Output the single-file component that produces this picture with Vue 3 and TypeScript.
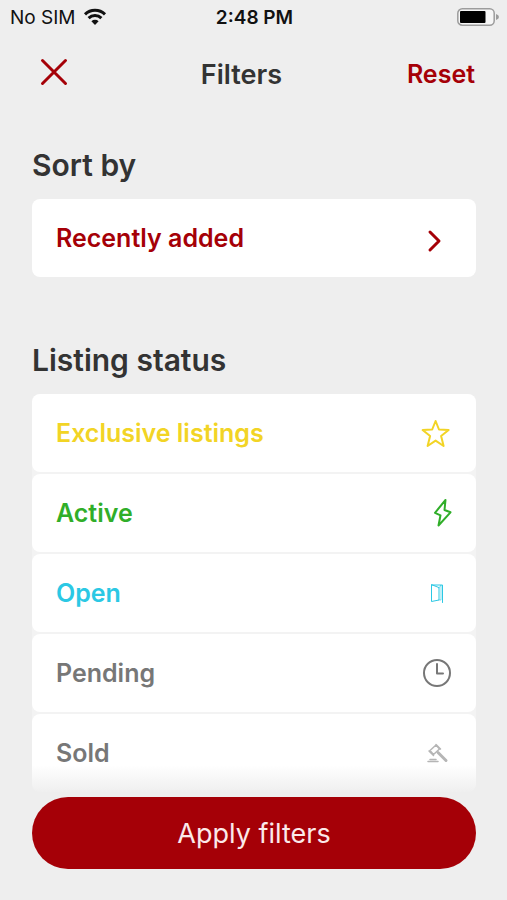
<script setup lang="ts">
import { ref } from 'vue'

type IconName = 'star' | 'bolt' | 'door' | 'clock' | 'gavel'

interface StatusOption {
  id: string
  label: string
  icon: IconName
}

const options: StatusOption[] = [
  { id: 'exclusive', label: 'Exclusive listings', icon: 'star' },
  { id: 'active', label: 'Active', icon: 'bolt' },
  { id: 'open', label: 'Open', icon: 'door' },
  { id: 'pending', label: 'Pending', icon: 'clock' },
  { id: 'sold', label: 'Sold', icon: 'gavel' },
]

const selected = ref<string[]>([])

function toggle(id: string): void {
  selected.value = selected.value.includes(id)
    ? selected.value.filter((item) => item !== id)
    : [...selected.value, id]
}

function reset(): void {
  selected.value = []
}
</script>

<template>
  <div class="screen">
    <div class="status-bar">
      <div class="carrier">
        <span>No SIM</span>
        <svg class="wifi" viewBox="0 0 24 18" aria-hidden="true">
          <path d="M2 6.4a14.4 14.4 0 0 1 20 0" />
          <path d="M5.6 10.2a9.2 9.2 0 0 1 12.8 0" />
          <path class="dot" d="M12 17l-3.6-3.7a5.2 5.2 0 0 1 7.2 0z" />
        </svg>
      </div>
      <span class="time">2:48 PM</span>
      <div class="power">
        <svg class="battery" viewBox="0 0 42 18" aria-hidden="true">
          <rect class="shell" x="0.8" y="0.8" width="36.4" height="16.4" rx="4.5" />
          <rect x="3" y="3" width="25.5" height="12" rx="1" />
          <path class="tip" d="M39 6q3 1 3 3t-3 3z" />
        </svg>
      </div>
    </div>

    <header class="header">
      <button class="close" type="button" aria-label="Close">
        <svg viewBox="0 0 28 28" aria-hidden="true"><path d="M2.5 2.5l23 23M25.5 2.5l-23 23" /></svg>
      </button>
      <h1 class="title">Filters</h1>
      <button class="reset" type="button" @click="reset">Reset</button>
    </header>

    <main class="content">
      <section class="group">
        <h2 class="heading">Sort by</h2>
        <button class="row sort" type="button">
          <span>Recently added</span>
          <svg class="icon" viewBox="0 0 32 32" aria-hidden="true"><path d="M9 10l9 9-9 9" /></svg>
        </button>
      </section>

      <section class="group">
        <h2 class="heading">Listing status</h2>
        <div class="list">
          <button
            v-for="option in options"
            :key="option.id"
            type="button"
            class="row"
            :class="option.id"
            :aria-pressed="selected.includes(option.id)"
            @click="toggle(option.id)"
          >
            <span>{{ option.label }}</span>
            <svg class="icon" viewBox="0 0 32 32" aria-hidden="true">
              <path
                v-if="option.icon === 'star'"
                d="M14.6 4l3.4 8.5 9.6.5-7.5 6 2.5 10-8-5.4-8 5.4 2.5-10-7.5-6 9.6-.5z"
              />
              <path v-else-if="option.icon === 'bolt'" d="M24.5 3L14 15.8l5.5 2.5-2 10.2 12-13.2-6-2.3z" />
              <g v-else-if="option.icon === 'door'">
                <path d="M10.5 8h11v17.5M10.5 8v16.5l7.5-1.5V11z" />
                <path class="faint" d="M18 11l2-3v15h-2" />
              </g>
              <g v-else-if="option.icon === 'clock'">
                <circle cx="16" cy="16" r="13" />
                <path d="M16 7v9.5h6" />
              </g>
              <g v-else>
                <path d="M9 13.5l6-5.5 3.5 4-6 5.500zM8 14l4.500 4.500M15 7.500l4.500 4.500" />
                <path class="handle" d="M17 15.500l8 8" />
                <path class="base" d="M7 24.500h10M9 22.500h6" />
              </g>
            </svg>
          </button>
        </div>
      </section>
    </main>

    <footer class="footer">
      <button class="apply" type="button">Apply filters</button>
    </footer>
  </div>
</template>

<style>
body {
  margin: 0;
  background: #eeeeee;
}
</style>

<style scoped>
.screen {
  display: flex;
  flex-direction: column;
  height: 100vh;
  background: #eeeeee;
  color: #333333;
  font-family: Inter, "Liberation Sans", sans-serif;
}

button {
  margin: 0;
  padding: 0;
  border: 0;
  background: none;
  color: inherit;
  font: inherit;
  cursor: pointer;
}

svg {
  display: block;
  fill: none;
  stroke: currentColor;
  stroke-linecap: round;
  stroke-linejoin: round;
}

.status-bar {
  display: grid;
  grid-template-columns: 1fr auto 1fr;
  align-items: center;
  height: 34px;
  padding: 0 8px 0 10px;
  color: #111111;
  font-size: 19px;
}

.carrier {
  display: flex;
  align-items: center;
  gap: 7px;
}

.wifi {
  width: 24px;
  height: 18px;
  stroke-width: 3;
  stroke-linecap: butt;
}

.wifi .dot {
  fill: currentColor;
  stroke: none;
}

.time {
  font-weight: 600;
}

.power {
  display: flex;
  justify-content: flex-end;
}

.battery {
  width: 42px;
  height: 18px;
  fill: #000000;
  stroke: none;
}

.battery .shell {
  fill: #f6f6f6;
  stroke: #9c9c9c;
  stroke-width: 1.5;
}

.battery .tip {
  fill: #9c9c9c;
}

.header {
  display: flex;
  align-items: center;
  justify-content: space-between;
  height: 80px;
  padding: 0 32px;
}

.close {
  display: grid;
  place-items: center;
  width: 44px;
  height: 44px;
  padding-bottom: 4px;
  color: #a50007;
}

.close svg {
  width: 28px;
  height: 28px;
  stroke-width: 3;
}

.title {
  margin: 0;
  font-size: 27px;
  font-weight: 600;
}

.reset {
  color: #a50007;
  font-size: 25px;
  font-weight: 600;
}

.content {
  flex: 1;
  min-height: 0;
  padding: 32px 31px 0 32px;
  overflow-y: auto;
  scrollbar-width: none;
}

.group {
  margin-bottom: 64px;
}

.heading {
  margin: 0 0 15px;
  font-size: 30px;
  font-weight: 600;
  line-height: 38px;
}

.list {
  display: grid;
  gap: 2px;
  border-radius: 8px;
  background: #f3f3f3;
}

.row {
  display: flex;
  align-items: center;
  justify-content: space-between;
  width: 100%;
  height: 78px;
  padding: 0 23px 0 24px;
  border-radius: 8px;
  background: #ffffff;
  font-size: 25px;
  font-weight: 600;
  text-align: left;
}

.icon {
  width: 32px;
  height: 32px;
  stroke-width: 2;
}

.sort {
  color: #a50007;
}

.sort .icon {
  stroke-width: 3;
}

.exclusive {
  color: #f2d425;
}

.active {
  color: #30ae29;
}

.open {
  color: #2bc8e4;
}

.open .icon {
  stroke-width: 1;
}

.open .faint {
  opacity: 0.6;
}

.pending,
.sold {
  color: #777777;
}

.sold .icon {
  color: #b5b5b5;
  stroke-width: 1.5;
}

.sold .handle {
  stroke-width: 3;
}

.footer {
  position: relative;
  padding: 0 31px 31px 32px;
}

.footer::before {
  content: "";
  position: absolute;
  right: 0;
  bottom: 100%;
  left: 0;
  height: 32px;
  background: linear-gradient(rgba(238, 238, 238, 0), #eeeeee 90%);
  pointer-events: none;
}

.apply {
  width: 100%;
  height: 72px;
  border-radius: 36px;
  background: #a50007;
  color: #fbe9ea;
  font-size: 27px;
}
</style>
